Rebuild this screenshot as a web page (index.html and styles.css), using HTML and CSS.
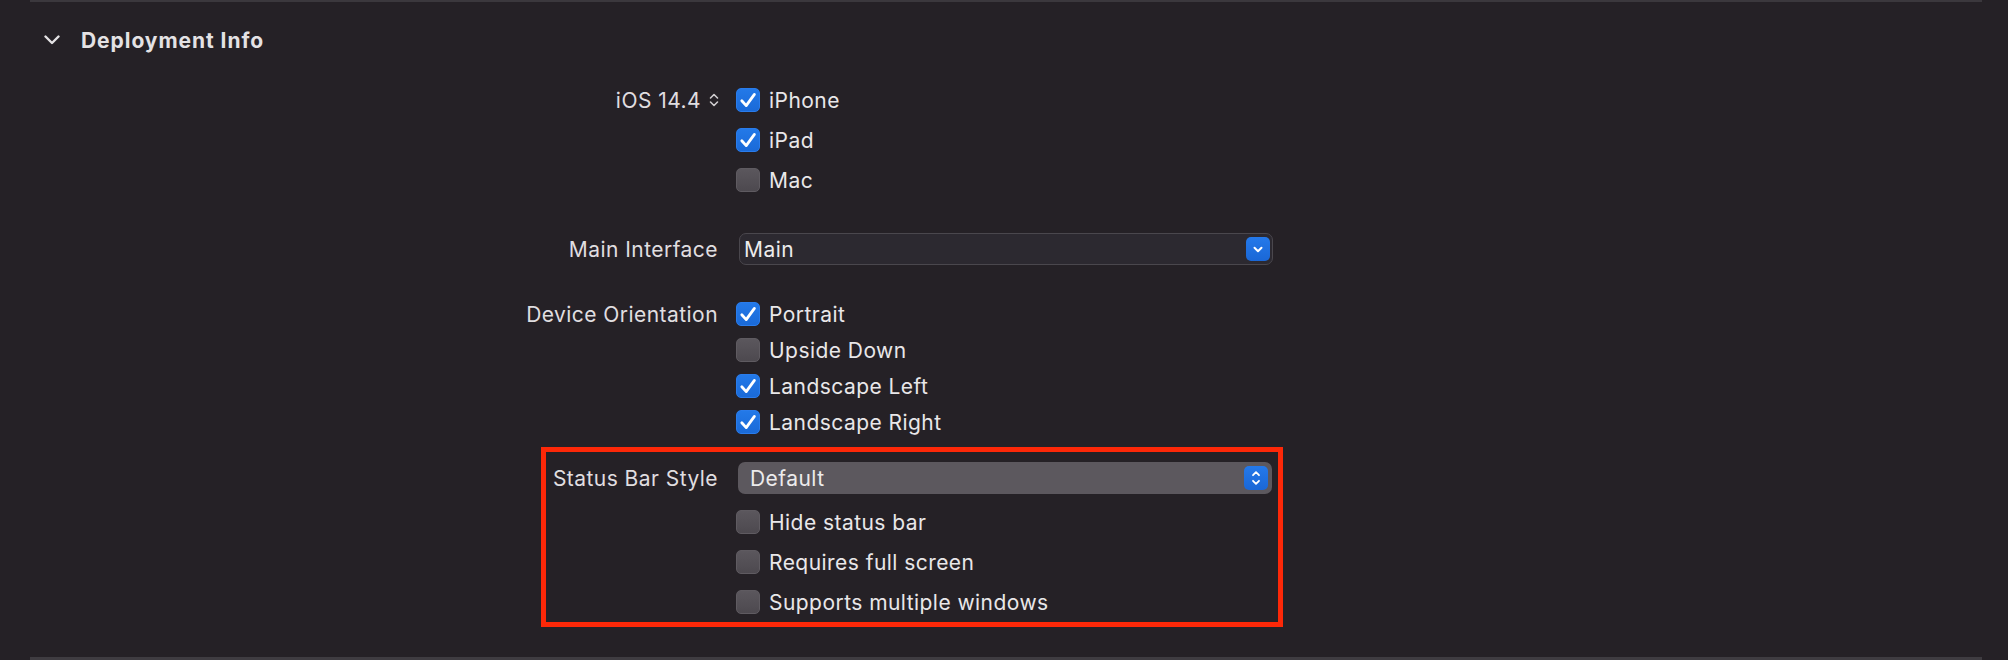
FILE: index.html
```html
<!DOCTYPE html>
<html>
<head>
<meta charset="utf-8">
<title>Deployment Info</title>
<link rel="stylesheet" href="styles.css">
</head>
<body>
<div class="pane">
  <div class="rule rule-top"></div>

  <div class="section-head">
    <svg class="disclosure" width="16" height="10" viewBox="0 0 16 10"><path d="M1.5 1.5 L8 8 L14.5 1.5" fill="none" stroke="#e4e2e4" stroke-width="2.4" stroke-linecap="round" stroke-linejoin="round"/></svg>
    <span class="section-title">Deployment Info</span>
  </div>

  <div class="form">
    <div class="field">
      <div class="label label-check">
        <span>iOS 14.4</span>
        <svg class="stepper" width="10" height="16" viewBox="0 0 10 16"><path d="M1.5 6 L5 2.5 L8.5 6 M1.5 10 L5 13.5 L8.5 10" fill="none" stroke="#cfcdcf" stroke-width="1.6" stroke-linecap="round" stroke-linejoin="round"/></svg>
      </div>
      <div class="controls">
        <div class="check"><span class="box on"><svg width="24" height="24" viewBox="0 0 24 24"><path d="M5.8 12.8 L10.2 17.6 L18.4 6.4" fill="none" stroke="#fff" stroke-width="2.8" stroke-linecap="round" stroke-linejoin="round"/></svg></span>iPhone</div>
        <div class="check"><span class="box on"><svg width="24" height="24" viewBox="0 0 24 24"><path d="M5.8 12.8 L10.2 17.6 L18.4 6.4" fill="none" stroke="#fff" stroke-width="2.8" stroke-linecap="round" stroke-linejoin="round"/></svg></span>iPad</div>
        <div class="check"><span class="box"></span>Mac</div>
      </div>
    </div>

    <div class="field field-popup">
      <div class="label label-popup">Main Interface</div>
      <div class="popup popup-combo">
        <span class="popup-text">Main</span>
        <span class="popup-btn"><svg width="24" height="24" viewBox="0 0 24 24"><path d="M8.5 10.8 L12 14.2 L15.5 10.8" fill="none" stroke="#fff" stroke-width="2" stroke-linecap="round" stroke-linejoin="round"/></svg></span>
      </div>
    </div>

    <div class="field field-orient">
      <div class="label label-tight">Device Orientation</div>
      <div class="controls">
        <div class="check tight"><span class="box on"><svg width="24" height="24" viewBox="0 0 24 24"><path d="M5.8 12.8 L10.2 17.6 L18.4 6.4" fill="none" stroke="#fff" stroke-width="2.8" stroke-linecap="round" stroke-linejoin="round"/></svg></span>Portrait</div>
        <div class="check tight"><span class="box"></span>Upside Down</div>
        <div class="check tight"><span class="box on"><svg width="24" height="24" viewBox="0 0 24 24"><path d="M5.8 12.8 L10.2 17.6 L18.4 6.4" fill="none" stroke="#fff" stroke-width="2.8" stroke-linecap="round" stroke-linejoin="round"/></svg></span>Landscape Left</div>
        <div class="check tight"><span class="box on"><svg width="24" height="24" viewBox="0 0 24 24"><path d="M5.8 12.8 L10.2 17.6 L18.4 6.4" fill="none" stroke="#fff" stroke-width="2.8" stroke-linecap="round" stroke-linejoin="round"/></svg></span>Landscape Right</div>
      </div>
    </div>

    <div class="highlight">
      <div class="field">
        <div class="label label-popup">Status Bar Style</div>
        <div class="popup popup-menu">
          <span class="popup-text">Default</span>
          <span class="popup-btn"><svg width="24" height="24" viewBox="0 0 24 24"><path d="M9 9.2 L12 6.2 L15 9.2 M9 14.8 L12 17.8 L15 14.8" fill="none" stroke="#fff" stroke-width="1.8" stroke-linecap="round" stroke-linejoin="round"/></svg></span>
        </div>
      </div>
      <div class="field field-after-popup">
        <div class="label"></div>
        <div class="controls">
          <div class="check"><span class="box"></span>Hide status bar</div>
          <div class="check"><span class="box"></span>Requires full screen</div>
          <div class="check"><span class="box"></span>Supports multiple windows</div>
        </div>
      </div>
    </div>
  </div>

  <div class="rule rule-bottom"></div>
</div>
</body>
</html>
```

FILE: styles.css
```css
html, body {
  margin: 0;
  padding: 0;
  background: #252126;
}

body {
  font-family: Inter, "Noto Sans", "DejaVu Sans", sans-serif;
  font-size: 21px;
  letter-spacing: 0.45px;
  color: #e6e4e6;
  width: 2008px;
  height: 660px;
  overflow: hidden;
}

.pane {
  display: flex;
  flex-direction: column;
}

.rule {
  margin: 0 26px 0 30px;
  background: #3b383d;
}

.rule-top {
  height: 2px;
}

.rule-bottom {
  height: 3px;
  margin-top: 30px;
  background: #3f3c41;
}

.section-head {
  display: flex;
  align-items: center;
  height: 40px;
  margin-top: 18px;
  padding-left: 44px;
  gap: 21px;
}

.section-title {
  font-weight: 700;
  font-size: 21px;
  color: #e4e2e4;
  letter-spacing: 0.95px;
}

.form {
  display: flex;
  flex-direction: column;
  margin-top: 20px;
  margin-left: 400px;
}

.field {
  display: flex;
  align-items: flex-start;
}

.label {
  width: 318px;
  margin-right: 18px;
  height: 40px;
  display: flex;
  align-items: center;
  justify-content: flex-end;
  gap: 8px;
  color: #e0dee0;
  white-space: nowrap;
}

.label-popup {
  height: 32px;
}

.label-tight {
  height: 36px;
}

.stepper {
  display: block;
  margin-right: -1px;
}

.controls {
  display: flex;
  flex-direction: column;
}

.check {
  display: flex;
  align-items: center;
  gap: 9px;
  height: 40px;
  color: #e9e7e9;
  white-space: nowrap;
}

.check.tight {
  height: 36px;
}

.box {
  width: 24px;
  height: 24px;
  box-sizing: border-box;
  border-radius: 5px;
  background: linear-gradient(#5b575d, #4d494f);
  border: 1px solid #5f5b61;
  flex: none;
  display: flex;
  align-items: center;
  justify-content: center;
  position: relative;
}

.box svg {
  position: absolute;
  left: -1px;
  top: -1px;
}

.box.on {
  background: linear-gradient(#2379e8, #1a6ad8);
  border-color: #2a7ceb;
}

.field-popup {
  margin-top: 33px;
}

.field-orient {
  margin-top: 31px;
}

.popup {
  height: 32px;
  box-sizing: border-box;
  border-radius: 7px;
  display: flex;
  align-items: center;
  justify-content: space-between;
  color: #ecebec;
}

.popup-combo {
  width: 534px;
  margin-left: 3px;
  background: #2c2930;
  border: 1px solid #4a474d;
  padding: 0 2px 0 4px;
}

.popup-menu {
  width: 534px;
  margin-left: 2px;
  background: #5c585e;
  padding: 0 4px 0 12px;
}

.popup-btn {
  width: 24px;
  height: 24px;
  border-radius: 5px;
  background: linear-gradient(#2479ea, #1a67d6);
  display: flex;
  align-items: center;
  justify-content: center;
}

.popup-btn svg {
  display: block;
}

.highlight {
  margin-top: 7px;
  margin-left: 141px;
  width: 742px;
  box-sizing: border-box;
  border: 5px solid #fd2808;
  padding-top: 10px;
}

.highlight .label {
  width: 172px;
}

.field-after-popup {
  margin-top: 8px;
}
```
